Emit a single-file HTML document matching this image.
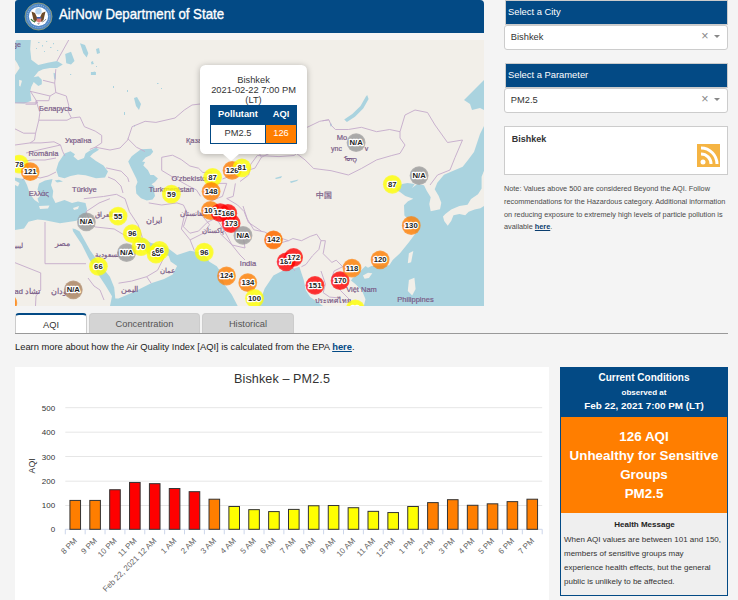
<!DOCTYPE html>
<html><head><meta charset="utf-8">
<style>
*{box-sizing:border-box;margin:0;padding:0}
html,body{width:738px;height:600px;overflow:hidden;background:#f4f4f4;font-family:"Liberation Sans",sans-serif;color:#333}
.abs{position:absolute}
#hdr{left:15px;top:0;width:469px;height:33px;background:#034a85;border-radius:3px 4px 0 0}
#hdr .t{left:43.5px;top:5px;color:#fff;font-size:15px;white-space:nowrap;transform:scaleX(0.884);transform-origin:0 0;-webkit-text-stroke:0.35px #fff}
.sel{left:505px;width:223px;border:1px solid #ccc;background:#fff}
.sel .h{background:#034a85;color:#fff;font-size:9.4px;height:23px;padding:5px 0 0 2px}
.inp{left:504.3px;width:223.7px;height:24.5px;border:1px solid #ccc;border-radius:3px;background:#fff;font-size:9.3px;padding:6px 0 0 5.5px;color:#333}
.inp .x{position:absolute;right:18.5px;top:2.5px;color:#888;font-size:12.5px}
.inp .a{position:absolute;right:6.5px;top:9px;width:0;height:0;border-left:3.5px solid transparent;border-right:3.5px solid transparent;border-top:3.5px solid #888}
#city{left:504.2px;top:126px;width:223.8px;height:49px;border:1px solid #ccc;background:#fff}
#city .n{position:absolute;left:6.5px;top:6.5px;font-size:9px;font-weight:bold;color:#333}
#city .rss{position:absolute;left:192.3px;top:17.2px;width:22.8px;height:22.6px;background:#f5b443}
#note{left:504px;top:182.6px;width:224px;font-size:7.3px;line-height:12.95px;color:#4a4a4a}
.tab{top:313px;height:21px;border:1px solid #ccc;border-bottom:none;border-radius:4px 4px 0 0;background:#d4d4d4;font-size:9.3px;color:#555;text-align:center;padding-top:5.4px}
#chart{left:15px;top:367px;width:534px;height:233px;background:#fff}
#cc{left:560px;top:367px;width:168px;height:229px;border:1px solid #034a85;background:#efefef}
#cc .top{position:absolute;left:0;top:0;width:166px;height:50px;background:#034a85;color:#fff;font-weight:bold;text-align:center}
#cc .org{position:absolute;left:0;top:49px;width:166px;height:96px;background:#ff7e00;color:#fff;font-weight:bold;text-align:center;font-size:13.4px;line-height:19px;padding-top:9.9px}
#cc .hm{position:absolute;left:0;top:144.2px;width:166px;font-size:8px;color:#333;padding:6px 2px 0 3px;line-height:14px}
#pop{left:199.8px;top:64.7px;width:107.5px;height:89.3px;background:#fff;border-radius:5.5px;box-shadow:0 1px 6px rgba(0,0,0,.28)}
#pop .tip{position:absolute;left:23.2px;top:89.3px;width:0;height:0;border-left:8px solid transparent;border-right:8px solid transparent;border-top:7px solid #fff}
#pop .txt{position:absolute;left:0;top:10.3px;width:107.5px;text-align:center;font-size:9.3px;line-height:10px;color:#333}
#pop table{position:absolute;left:10.2px;top:40.5px;width:87px;border-collapse:collapse;font-size:9.3px}
#pop td{border:1px solid #034a85;text-align:center;height:19px;padding-bottom:1.5px}
</style></head><body>
<div id="hdr" class="abs">
<svg class="abs" style="left:9px;top:2px" width="29" height="29" viewBox="0 0 29 29">
<polygon points="14.5,1 19.7,2 24,5 27,9.3 28,14.5 27,19.7 24,24 19.7,27 14.5,28 9.3,27 5,24 2,19.7 1,14.5 2,9.3 5,5 9.3,2" fill="#4f86c4" stroke="#b5b26c" stroke-width="0.7"/>
<circle cx="14.5" cy="14.5" r="11.2" fill="none" stroke="#9cc0e6" stroke-width="1" stroke-dasharray="1 1.2"/>
<circle cx="14.5" cy="14.5" r="9.6" fill="#fff"/>
<circle cx="14.5" cy="9.3" r="3.2" fill="#b9d6ee"/>
<path d="M7.5 9.5 L11 11 L13.5 16.5 L12 20 L9.5 18 Z" fill="#6e4b28"/>
<path d="M21.5 9.5 L18 11 L15.5 16.5 L17 20 L19.5 18 Z" fill="#6e4b28"/>
<path d="M12.8 16 h4.4 v3.2 q-2.2 2.4 -4.4 0 Z" fill="#e07a7a"/>
<rect x="12.8" y="15" width="4.4" height="1.6" fill="#3b5fa8"/>
<path d="M7 17 q1.5 2.5 4 3" stroke="#3f7a3a" stroke-width="1.4" fill="none"/>
<path d="M22 17 q-1.5 2.5 -4 3" stroke="#9a9a9a" stroke-width="1" fill="none"/>
<path d="M13 21 l1.5 2 l1.5 -2 Z" fill="#aaa"/>
</svg>
<div class="t abs">AirNow Department of State</div></div>
<svg class="abs" style="left:15px;top:40px" width="469" height="266" viewBox="15 40 469 266">
<rect x="15" y="40" width="469" height="266" fill="#f2efe9"/>
<path d="M15.0 43.0 L16.2 40.0 L30.8 40.0 L30.2 49.3 L31.3 59.8 L38.3 65.1 L47.7 62.8 L57.0 61.0 L62.8 64.5 L57.0 68.0 L50.0 68.0 L43.0 69.2 L38.3 71.5 L33.7 77.3 L38.3 76.2 L41.8 79.7 L41.8 84.3 L38.3 86.1 L33.7 82.0 L31.3 86.7 L30.2 91.3 L31.3 100.7 L24.3 103.6 L15.0 103.0 L15.0 75.0 L19.7 68.0 L17.3 63.3 L15.0 59.8Z" fill="#aad3df"/>
<path d="M65.2 54.0 L71.0 51.7 L74.5 61.0 L71.0 64.5 L66.3 63.3Z" fill="#aad3df"/>
<path d="M80.0 43.3 L85.0 45.0 L88.3 53.3 L86.7 57.5 L83.3 53.3 L81.7 48.3Z" fill="#aad3df"/>
<path d="M53.5 72.7 L55.8 73.8 L55.8 79.7 L54.1 78.5Z" fill="#aad3df"/>
<path d="M134.0 98.0 L137.0 97.0 L141.0 104.0 L139.0 110.0 L136.0 106.0Z" fill="#aad3df"/>
<path d="M96.0 49.0 L99.0 48.0 L100.0 53.0 L97.0 54.0Z" fill="#aad3df"/>
<path d="M56.2 170.0 L58.5 162.5 L64.5 153.5 L70.5 151.2 L75.0 154.2 L73.5 156.5 L78.0 160.2 L84.0 158.0 L85.5 153.5 L90.0 150.5 L96.0 147.5 L99.0 149.7 L93.0 153.5 L90.0 156.5 L96.0 161.0 L103.5 165.5 L108.0 171.5 L105.0 177.5 L96.0 178.2 L85.5 175.2 L78.0 174.5 L70.5 176.0 L64.5 178.2 L58.5 176.7Z" fill="#aad3df"/>
<path d="M128.2 161.6 L131.7 156.3 L136.3 152.8 L141.0 149.3 L151.5 148.7 L153.2 151.7 L150.3 155.2 L145.6 157.5 L142.1 161.6 L145.1 162.1 L143.3 165.6 L148.0 170.3 L150.3 175.0 L153.8 175.0 L157.9 178.5 L155.0 182.0 L151.5 184.3 L154.4 186.6 L153.8 190.1 L155.0 196.0 L152.6 199.4 L146.8 200.6 L141.0 198.3 L136.3 193.6 L135.7 186.6 L137.5 182.0 L136.3 178.5 L132.8 171.5 L130.5 166.8Z" fill="#aad3df"/>
<path d="M15.0 177.5 L24.0 179.0 L27.0 185.0 L30.0 194.0 L34.5 200.0 L39.0 203.0 L37.5 198.5 L40.5 195.5 L37.5 189.5 L39.0 183.5 L45.0 180.5 L52.5 179.0 L51.0 185.0 L53.2 191.0 L52.5 197.0 L55.5 203.0 L64.5 200.0 L72.0 203.0 L78.0 201.5 L85.5 203.0 L87.0 209.0 L85.5 218.0 L75.0 221.0 L60.0 223.2 L45.0 220.2 L37.5 219.5 L28.5 221.7 L24.0 228.5 L15.0 230.0Z" fill="#aad3df"/>
<path d="M54.7 180.5 L59.0 179.8 L63.0 181.5 L57.0 182.5Z" fill="#aad3df"/>
<path d="M72.5 228.5 L75.0 229.0 L79.5 231.2 L90.4 250.7 L101.2 265.9 L109.9 276.7 L114.2 287.6 L115.3 298.4 L118.5 298.4 L114.2 306.0 L110.0 306.0 L112.0 296.2 L105.5 285.4 L96.9 272.4 L88.2 257.2 L81.7 244.2 L73.0 231.2Z" fill="#aad3df"/>
<path d="M134.0 236.0 L142.4 237.7 L151.1 243.1 L164.1 245.3 L168.4 248.5 L177.1 255.0 L170.0 256.0 L164.1 255.0 L157.6 257.2 L150.0 255.0 L140.0 246.0Z" fill="#aad3df"/>
<path d="M112.0 306.0 L118.5 298.4 L133.7 291.9 L151.1 283.2 L164.1 278.9 L172.7 274.6 L177.1 265.9 L170.6 261.5 L168.4 255.0 L177.1 255.0 L190.1 250.7 L194.5 251.4 L204.0 253.0 L209.4 261.8 L216.8 266.3 L219.8 270.8 L224.3 284.2 L231.7 294.6 L237.7 306.0Z" fill="#aad3df"/>
<path d="M258.2 306.0 L264.7 288.4 L273.4 275.4 L282.0 271.0 L292.9 268.9 L299.4 266.7 L301.5 273.2 L303.7 279.7 L305.9 290.6 L310.2 297.1 L316.7 301.4 L323.2 306.0Z" fill="#aad3df"/>
<path d="M484.0 126.0 L480.0 134.0 L474.0 152.0 L468.0 160.0 L462.7 166.7 L453.3 170.7 L444.0 174.7 L437.3 182.7 L434.7 189.3 L438.7 196.0 L441.3 202.7 L440.0 209.3 L430.7 211.3 L429.3 204.0 L430.7 197.3 L426.7 190.7 L424.0 185.3 L417.3 184.0 L412.0 188.0 L414.7 184.0 L407.5 183.1 L402.0 184.0 L396.0 190.0 L400.0 192.0 L405.3 196.0 L413.3 198.7 L408.0 201.3 L404.0 205.3 L404.4 215.6 L413.3 224.4 L415.6 233.3 L408.9 242.2 L400.0 253.2 L392.7 260.1 L389.3 265.2 L371.4 266.0 L368.0 267.7 L365.5 266.0 L361.2 270.3 L357.8 274.5 L352.7 277.9 L351.0 280.5 L355.3 283.9 L358.7 287.3 L362.1 290.7 L363.8 295.0 L365.5 299.2 L363.8 306.0 L484.0 306.0Z" fill="#aad3df"/>
<path d="M484.0 80.0 L476.0 88.0 L464.0 100.0 L470.0 104.0 L472.0 110.0 L480.0 108.0 L484.0 110.0Z" fill="#aad3df"/>
<path d="M367.2 95.0 L368.6 99.1 L363.2 108.6 L355.0 116.7 L346.9 122.1 L344.2 119.4 L352.3 114.0 L360.5 105.9 L365.9 96.4Z" fill="#aad3df"/>
<path d="M330.0 124.0 L331.5 123.5 L332.0 126.0 L330.5 126.5Z" fill="#aad3df"/>
<path d="M38.0 42.0 L39.5 42.0 L39.5 43.0 L38.0 43.0Z" fill="#aad3df"/>
<path d="M42.0 45.0 L43.0 45.0 L43.0 46.5 L42.0 46.5Z" fill="#aad3df"/>
<path d="M46.0 41.0 L47.2 41.0 L47.2 42.0 L46.0 42.0Z" fill="#aad3df"/>
<path d="M50.0 47.0 L51.5 47.0 L51.5 48.0 L50.0 48.0Z" fill="#aad3df"/>
<path d="M44.0 51.0 L45.0 51.0 L45.0 52.0 L44.0 52.0Z" fill="#aad3df"/>
<path d="M53.0 43.0 L54.0 43.0 L54.0 44.2 L53.0 44.2Z" fill="#aad3df"/>
<path d="M36.0 48.0 L37.0 48.0 L37.0 49.0 L36.0 49.0Z" fill="#aad3df"/>
<path d="M57.0 50.0 L58.2 50.0 L58.2 51.0 L57.0 51.0Z" fill="#aad3df"/>
<path d="M90.9 72.0 L95.9 72.0 L95.9 75.0 L90.9 75.0Z" fill="#aad3df"/>
<path d="M92.0 63.0 L93.5 63.0 L93.5 64.0 L92.0 64.0Z" fill="#aad3df"/>
<path d="M96.0 66.0 L97.0 66.0 L97.0 67.0 L96.0 67.0Z" fill="#aad3df"/>
<path d="M70.0 74.0 L71.2 74.0 L71.2 75.0 L70.0 75.0Z" fill="#aad3df"/>
<path d="M113.0 86.0 L114.0 86.0 L114.0 88.0 L113.0 88.0Z" fill="#aad3df"/>
<path d="M127.0 90.0 L128.0 90.0 L128.0 92.0 L127.0 92.0Z" fill="#aad3df"/>
<path d="M157.0 83.0 L158.5 83.0 L158.5 84.0 L157.0 84.0Z" fill="#aad3df"/>
<path d="M161.0 88.0 L162.0 88.0 L162.0 89.0 L161.0 89.0Z" fill="#aad3df"/>
<path d="M124.0 112.0 L125.0 112.0 L125.0 115.0 L124.0 115.0Z" fill="#aad3df"/>
<path d="M134.0 125.0 L135.0 125.0 L135.0 126.5 L134.0 126.5Z" fill="#aad3df"/>
<path d="M91.0 62.0 L93.0 61.0 L93.5 64.0 L91.5 64.5Z" fill="#aad3df"/>
<path d="M93.0 72.0 L95.0 71.5 L95.5 74.0 L93.5 74.5Z" fill="#aad3df"/>
<path d="M289.9 181.5 L298.5 179.4 L297.0 181.0 L291.0 183.0Z" fill="#aad3df"/>
<path d="M275.0 178.0 L282.0 176.0 L281.0 178.0 L276.0 179.0Z" fill="#aad3df"/>
<path d="M19.1 79.7 L22.0 80.8 L20.3 86.7 L19.1 85.5Z" fill="#f2efe9"/>
<path d="M484.0 170.8 L481.6 176.7 L481.6 188.4 L478.0 194.2 L471.0 198.9 L467.5 204.7 L459.4 205.9 L451.2 209.4 L445.3 214.1 L443.0 216.4 L444.2 221.1 L447.7 225.7 L451.2 221.1 L453.5 215.2 L459.4 214.1 L465.2 215.2 L468.7 211.7 L474.6 209.4 L480.4 208.2 L484.0 205.9Z" fill="#f2efe9"/>
<path d="M408.9 253.3 L413.3 251.1 L411.1 262.2 L407.8 263.3Z" fill="#f2efe9"/>
<path d="M408.9 280.0 L414.4 277.8 L415.6 288.9 L412.2 295.6 L407.8 291.1Z" fill="#f2efe9"/>
<path d="M362.9 275.4 L368.0 272.8 L372.3 273.3 L368.9 277.9 L364.6 278.8Z" fill="#f2efe9"/>
<path d="M39.0 206.0 L49.5 205.5 L48.0 208.5 L40.0 209.0Z" fill="#f2efe9"/>
<path d="M15.0 180.5 L19.5 183.0 L18.0 186.5 L15.0 185.0Z" fill="#f2efe9"/>
<path d="M73.0 208.0 L79.0 206.0 L78.0 209.0 L74.0 210.0Z" fill="#f2efe9"/>
<g fill="none" stroke="#c4aacb" stroke-width="0.9"><polyline points="68.7,40.0 57.0,61.0"/><polyline points="55.8,69.2 54.7,83.2 55.8,92.5 66.3,96.0 68.7,105.3 68.1,111.5 71.4,118.0"/><polyline points="43.0,80.3 54.7,83.2"/><polyline points="30.2,91.3 50.0,96.0 55.8,92.5"/><polyline points="50.0,96.0 48.8,100.7 36.0,100.7 36.0,104.2 25.5,104.2"/><polyline points="36.0,100.7 39.9,112.6 38.8,120.2 35.6,133.2 34.5,140.0 30.2,142.9"/><polyline points="38.8,120.2 67.0,120.2 71.4,118.0"/><polyline points="71.4,118.0 80.0,117.0 84.4,126.7 95.2,131.1 101.7,135.4 101.7,142.9 95.2,147.2 89.8,149.4"/><polyline points="15.0,102.9 37.8,102.9"/><polyline points="15.0,128.9 23.7,133.2 35.6,133.2"/><polyline points="30.2,91.0 37.8,102.9"/><polyline points="15.0,145.0 30.2,142.9 41.0,142.9 54.0,141.8 60.5,145.0 62.7,151.5 64.9,155.9"/><polyline points="26.0,153.0 41.0,149.4 60.5,145.0"/><polyline points="18.0,162.0 32.0,160.0 45.0,160.0 56.0,158.0"/><polyline points="22.0,180.0 30.0,175.0 40.0,178.0 48.0,176.0 56.0,172.0"/><polyline points="95.2,147.2 110.0,150.0 120.0,148.0 127.7,140.0 132.1,126.7 145.1,121.3 155.9,122.4 175.0,118.0 184.3,110.0 192.0,105.0 200.0,104.0"/><polyline points="127.7,138.5 136.4,147.2 145.0,151.5"/><polyline points="307.2,127.3 319.7,121.3 322.4,120.8 328.9,119.8"/><polyline points="106.1,167.9 121.2,171.2 127.7,177.7 129.0,182.0"/><polyline points="108.0,177.0 115.0,180.0 121.0,186.0 123.0,193.0"/><polyline points="83.8,198.7 103.4,196.5 116.4,194.3 125.0,198.7"/><polyline points="125.0,198.7 129.4,211.7 138.0,224.7 142.4,237.7"/><polyline points="86.0,211.7 99.0,203.0 109.9,198.7"/><polyline points="94.7,226.9 114.2,229.0 125.0,235.5 135.9,239.9"/><polyline points="86.0,211.7 90.0,222.0 94.7,226.9"/><polyline points="45.0,222.0 45.0,263.7 86.0,263.7"/><polyline points="15.0,262.7 40.7,272.9 40.7,290.0 36.0,296.0 35.5,306.0"/><polyline points="88.0,278.0 94.0,286.0 100.0,290.0 104.0,300.0"/><polyline points="118.5,283.2 131.5,281.1 146.7,276.7 157.6,270.2 164.1,257.2"/><polyline points="151.1,283.2 146.7,276.7"/><polyline points="161.7,157.3 172.5,155.2 181.2,159.5 189.9,166.0 198.5,168.2 202.9,172.5 212.0,172.0"/><polyline points="161.7,157.3 161.7,170.4 172.5,176.9 187.7,185.5 196.4,189.9 200.7,196.4"/><polyline points="148.7,202.9 161.7,205.0 176.9,202.9 183.4,205.0 187.7,213.7"/><polyline points="187.7,213.7 183.4,226.7 189.9,233.2 198.5,231.1 207.2,222.4 215.9,218.0"/><polyline points="185.7,209.5 181.4,229.0 190.1,239.9 194.4,250.7"/><polyline points="198.8,211.7 209.6,224.7 203.1,233.4 190.1,239.9"/><polyline points="222.4,179.0 239.7,172.5 254.9,168.2 261.4,157.3 259.2,153.0"/><polyline points="261.4,157.3 270.1,153.0 274.4,144.3"/><polyline points="235.4,183.4 233.2,196.4 226.7,198.5 237.6,205.0 244.1,211.5 248.4,222.4 261.4,231.1"/><polyline points="211.5,183.4 226.7,183.4 222.4,196.4 211.5,200.7"/><polyline points="215.9,218.0 225.0,232.0 232.0,245.0 240.0,255.0 245.0,260.0"/><polyline points="294.2,155.5 279.0,156.6 257.3,155.5 250.8,164.2 248.7,175.0 240.0,181.5"/><polyline points="307.2,127.3 298.5,133.8 296.4,153.4 294.2,155.5"/><polyline points="322.4,120.8 328.9,119.8 331.1,125.2 335.4,129.5 348.4,129.5 361.4,127.3 376.6,131.7 389.6,129.5 400.0,131.7 405.0,115.0 415.0,110.0 427.5,112.5 435.0,125.0 447.5,142.5 462.5,140.0 455.0,157.5 450.0,170.0 437.5,175.0 430.0,185.0"/><polyline points="296.4,153.4 305.0,159.9 313.7,168.5 331.1,170.7 348.4,175.0 361.4,168.5 376.6,159.9 391.8,155.5 400.0,153.4 405.0,145.0 400.0,138.0 400.0,131.7"/><polyline points="243.0,206.0 247.3,219.0 253.8,229.8 264.7,232.0 273.4,236.4 282.0,238.5 288.5,240.7 292.9,238.5 301.5,240.7 310.2,236.4 316.7,234.2 321.0,240.7 325.4,240.7"/><polyline points="321.0,240.7 318.9,249.4 312.4,255.9 305.9,264.5 301.5,266.7"/><polyline points="325.4,240.7 323.2,253.7 331.9,262.4 336.2,260.2 342.7,266.7 351.4,266.7 360.0,266.0"/><polyline points="342.7,266.7 334.1,271.0 331.9,277.5 340.6,290.6 351.4,301.4"/><polyline points="321.0,271.0 325.4,284.0 323.2,292.7 329.7,297.1 340.0,298.0"/><polyline points="284.2,255.9 288.5,262.4 295.0,271.0"/><polyline points="270.0,237.0 272.0,242.0 280.0,243.0 288.5,240.7"/><polyline points="220.0,233.4 232.0,245.0 245.0,248.0 243.0,236.0"/></g>
<g fill="#7a5c88" stroke="#7a5c88" stroke-width="0.2" font-family="Liberation Sans, sans-serif">
<text x="55.5" y="110.8" font-size="7.5" text-anchor="middle">Беларусь</text>
<text x="78.3" y="142.9" font-size="7.5" text-anchor="middle">Україна</text>
<text x="43.4" y="156.3" font-size="7.5" text-anchor="middle">România</text>
<text x="38.8" y="195.5" font-size="7.5" text-anchor="middle">Ελλάς</text>
<text x="84.4" y="191.6" font-size="7.5" text-anchor="middle">Türkiye</text>
<text x="186" y="143.1" font-size="7.5" text-anchor="start">Қаза</text>
<text x="171.4" y="180.5" font-size="7.5" text-anchor="start">O'zbekiston</text>
<text x="148.7" y="192.0" font-size="7.5" text-anchor="start">Turkmenistan</text>
<text x="154.3" y="223.0" font-size="7.5" text-anchor="middle">ایران</text>
<text x="62" y="245.6" font-size="7.5" text-anchor="middle">مصر</text>
<text x="108" y="256.6" font-size="7" text-anchor="middle">السعودية</text>
<text x="167.3" y="272.8" font-size="7" text-anchor="middle">عمان</text>
<text x="129.3" y="292.3" font-size="7.5" text-anchor="middle">اليمن</text>
<text x="18" y="247.6" font-size="7" text-anchor="middle">ليبيا</text>
<text x="64" y="294.1" font-size="7.5" text-anchor="middle">السودان</text>
<text x="40" y="293.6" font-size="7.5" text-anchor="end">ad تشاد</text>
<text x="193.3" y="216.4" font-size="7" text-anchor="middle">افغانستان</text>
<text x="212.6" y="232.7" font-size="7" text-anchor="middle">پاکستان</text>
<text x="248" y="266.1" font-size="7.5" text-anchor="middle">India</text>
<text x="323.5" y="198.2" font-size="7.5" text-anchor="middle">中国</text>
<text x="361.5" y="292.0" font-size="7.5" text-anchor="middle">Việt Nam</text>
<text x="332.5" y="302.9" font-size="7" text-anchor="middle">ประเทศไทย</text>
<text x="415.5" y="301.9" font-size="7.5" text-anchor="middle">Philippines</text>
<text x="342" y="139.7" font-size="7.5" text-anchor="middle">Mo</text>
<text x="336.5" y="150.6" font-size="7" text-anchor="middle">ync</text>
<text x="366.5" y="150.6" font-size="7" text-anchor="middle">v</text>
<text x="350" y="160.6" font-size="7" text-anchor="middle">ᠮᠣᠩ</text>
<text x="17" y="46.6" font-size="7" text-anchor="middle">ge</text>
<text x="104" y="216.6" font-size="7" text-anchor="middle">العراق</text>
</g>
<g font-family="Liberation Sans, sans-serif" font-weight="bold" text-anchor="middle">
<circle cx="7.8" cy="303" r="9.4" fill="#ff7e00" fill-opacity="0.7"/><circle cx="7.8" cy="303" r="8.4" fill="#ff7e00" fill-opacity="0.35"/>
<circle cx="19.3" cy="164.1" r="9.4" fill="#ffff00" fill-opacity="0.7"/><circle cx="19.3" cy="164.1" r="8.4" fill="#ffff00" fill-opacity="0.35"/>
<circle cx="30.2" cy="171.7" r="9.4" fill="#ff7e00" fill-opacity="0.7"/><circle cx="30.2" cy="171.7" r="8.4" fill="#ff7e00" fill-opacity="0.35"/>
<circle cx="212.6" cy="177.3" r="9.4" fill="#ffff00" fill-opacity="0.7"/><circle cx="212.6" cy="177.3" r="8.4" fill="#ffff00" fill-opacity="0.35"/>
<circle cx="232.1" cy="170.4" r="9.4" fill="#ff7e00" fill-opacity="0.7"/><circle cx="232.1" cy="170.4" r="8.4" fill="#ff7e00" fill-opacity="0.35"/>
<circle cx="241.9" cy="167.8" r="9.4" fill="#ffff00" fill-opacity="0.7"/><circle cx="241.9" cy="167.8" r="8.4" fill="#ffff00" fill-opacity="0.35"/>
<circle cx="171.4" cy="194.2" r="9.4" fill="#ffff00" fill-opacity="0.7"/><circle cx="171.4" cy="194.2" r="8.4" fill="#ffff00" fill-opacity="0.35"/>
<circle cx="211.1" cy="191.4" r="9.4" fill="#ff7e00" fill-opacity="0.7"/><circle cx="211.1" cy="191.4" r="8.4" fill="#ff7e00" fill-opacity="0.35"/>
<circle cx="210.5" cy="210.5" r="9.4" fill="#ff7e00" fill-opacity="0.7"/><circle cx="210.5" cy="210.5" r="8.4" fill="#ff7e00" fill-opacity="0.35"/>
<circle cx="231.1" cy="223.5" r="9.4" fill="#ff0000" fill-opacity="0.7"/><circle cx="231.1" cy="223.5" r="8.4" fill="#ff0000" fill-opacity="0.35"/>
<circle cx="220.2" cy="212.6" r="9.4" fill="#ff0000" fill-opacity="0.7"/><circle cx="220.2" cy="212.6" r="8.4" fill="#ff0000" fill-opacity="0.35"/>
<circle cx="227.8" cy="213.3" r="9.4" fill="#ff0000" fill-opacity="0.7"/><circle cx="227.8" cy="213.3" r="8.4" fill="#ff0000" fill-opacity="0.35"/>
<circle cx="243" cy="235.4" r="9.4" fill="#999999" fill-opacity="0.7"/><circle cx="243" cy="235.4" r="8.4" fill="#999999" fill-opacity="0.35"/>
<circle cx="118.1" cy="216.1" r="9.4" fill="#ffff00" fill-opacity="0.7"/><circle cx="118.1" cy="216.1" r="8.4" fill="#ffff00" fill-opacity="0.35"/>
<circle cx="86.4" cy="221.9" r="9.4" fill="#999999" fill-opacity="0.7"/><circle cx="86.4" cy="221.9" r="8.4" fill="#999999" fill-opacity="0.35"/>
<circle cx="132.2" cy="233.7" r="9.4" fill="#ffff00" fill-opacity="0.7"/><circle cx="132.2" cy="233.7" r="8.4" fill="#ffff00" fill-opacity="0.35"/>
<circle cx="126.6" cy="252.6" r="9.4" fill="#999999" fill-opacity="0.7"/><circle cx="126.6" cy="252.6" r="8.4" fill="#999999" fill-opacity="0.35"/>
<circle cx="141" cy="246.6" r="9.4" fill="#ffff00" fill-opacity="0.7"/><circle cx="141" cy="246.6" r="8.4" fill="#ffff00" fill-opacity="0.35"/>
<circle cx="156" cy="254" r="9.4" fill="#ffff00" fill-opacity="0.7"/><circle cx="156" cy="254" r="8.4" fill="#ffff00" fill-opacity="0.35"/>
<circle cx="159.5" cy="250.5" r="9.4" fill="#ffff00" fill-opacity="0.7"/><circle cx="159.5" cy="250.5" r="8.4" fill="#ffff00" fill-opacity="0.35"/>
<circle cx="98.4" cy="266.3" r="9.4" fill="#ffff00" fill-opacity="0.7"/><circle cx="98.4" cy="266.3" r="8.4" fill="#ffff00" fill-opacity="0.35"/>
<circle cx="73.3" cy="289.8" r="9.4" fill="#a8825e" fill-opacity="0.7"/><circle cx="73.3" cy="289.8" r="8.4" fill="#a8825e" fill-opacity="0.35"/>
<circle cx="204.2" cy="252.1" r="9.4" fill="#ffff00" fill-opacity="0.7"/><circle cx="204.2" cy="252.1" r="8.4" fill="#ffff00" fill-opacity="0.35"/>
<circle cx="226.5" cy="276" r="9.4" fill="#ff7e00" fill-opacity="0.7"/><circle cx="226.5" cy="276" r="8.4" fill="#ff7e00" fill-opacity="0.35"/>
<circle cx="247.8" cy="282.7" r="9.4" fill="#ff7e00" fill-opacity="0.7"/><circle cx="247.8" cy="282.7" r="8.4" fill="#ff7e00" fill-opacity="0.35"/>
<circle cx="254.5" cy="298.3" r="9.4" fill="#ffff00" fill-opacity="0.7"/><circle cx="254.5" cy="298.3" r="8.4" fill="#ffff00" fill-opacity="0.35"/>
<circle cx="273.5" cy="239.8" r="9.4" fill="#ff7e00" fill-opacity="0.7"/><circle cx="273.5" cy="239.8" r="8.4" fill="#ff7e00" fill-opacity="0.35"/>
<circle cx="273.5" cy="239.8" r="9" fill="#ff5a00" fill-opacity="0.4"/>
<circle cx="286.1" cy="261.8" r="9.4" fill="#ff0000" fill-opacity="0.7"/><circle cx="286.1" cy="261.8" r="8.4" fill="#ff0000" fill-opacity="0.35"/>
<circle cx="293.6" cy="257.4" r="9.4" fill="#ff0000" fill-opacity="0.7"/><circle cx="293.6" cy="257.4" r="8.4" fill="#ff0000" fill-opacity="0.35"/>
<circle cx="315" cy="285.3" r="9.4" fill="#ff0000" fill-opacity="0.7"/><circle cx="315" cy="285.3" r="8.4" fill="#ff0000" fill-opacity="0.35"/>
<circle cx="340.1" cy="280.7" r="9.4" fill="#ff0000" fill-opacity="0.7"/><circle cx="340.1" cy="280.7" r="8.4" fill="#ff0000" fill-opacity="0.35"/>
<circle cx="352" cy="268.1" r="9.4" fill="#ff7e00" fill-opacity="0.7"/><circle cx="352" cy="268.1" r="8.4" fill="#ff7e00" fill-opacity="0.35"/>
<circle cx="380.1" cy="259.8" r="9.4" fill="#ff7e00" fill-opacity="0.7"/><circle cx="380.1" cy="259.8" r="8.4" fill="#ff7e00" fill-opacity="0.35"/>
<circle cx="411.25" cy="225.5" r="9.4" fill="#ff7e00" fill-opacity="0.7"/><circle cx="411.25" cy="225.5" r="8.4" fill="#ff7e00" fill-opacity="0.35"/>
<circle cx="392.3" cy="184.3" r="9.4" fill="#ffff00" fill-opacity="0.7"/><circle cx="392.3" cy="184.3" r="8.4" fill="#ffff00" fill-opacity="0.35"/>
<circle cx="419.1" cy="175.7" r="9.4" fill="#999999" fill-opacity="0.7"/><circle cx="419.1" cy="175.7" r="8.4" fill="#999999" fill-opacity="0.35"/>
<circle cx="356.1" cy="142.7" r="9.4" fill="#999999" fill-opacity="0.7"/><circle cx="356.1" cy="142.7" r="8.4" fill="#999999" fill-opacity="0.35"/>
<circle cx="355.3" cy="309" r="9.4" fill="#ffff00" fill-opacity="0.7"/><circle cx="355.3" cy="309" r="8.4" fill="#ffff00" fill-opacity="0.35"/>
<text x="19.3" y="166.5" font-size="7.7" fill="#222" stroke="#fff" stroke-width="2.4" stroke-linejoin="round" paint-order="stroke">78</text>
<text x="30.2" y="174.1" font-size="7.7" fill="#222" stroke="#fff" stroke-width="2.4" stroke-linejoin="round" paint-order="stroke">121</text>
<text x="212.6" y="179.7" font-size="7.7" fill="#222" stroke="#fff" stroke-width="2.4" stroke-linejoin="round" paint-order="stroke">87</text>
<text x="232.1" y="172.8" font-size="7.7" fill="#222" stroke="#fff" stroke-width="2.4" stroke-linejoin="round" paint-order="stroke">126</text>
<text x="241.9" y="170.2" font-size="7.7" fill="#222" stroke="#fff" stroke-width="2.4" stroke-linejoin="round" paint-order="stroke">81</text>
<text x="171.4" y="196.6" font-size="7.7" fill="#222" stroke="#fff" stroke-width="2.4" stroke-linejoin="round" paint-order="stroke">59</text>
<text x="211.1" y="193.8" font-size="7.7" fill="#222" stroke="#fff" stroke-width="2.4" stroke-linejoin="round" paint-order="stroke">148</text>
<text x="210.5" y="212.9" font-size="7.7" fill="#222" stroke="#fff" stroke-width="2.4" stroke-linejoin="round" paint-order="stroke">101</text>
<text x="231.1" y="225.9" font-size="7.7" fill="#222" stroke="#fff" stroke-width="2.4" stroke-linejoin="round" paint-order="stroke">173</text>
<text x="220.2" y="215.0" font-size="7.7" fill="#222" stroke="#fff" stroke-width="2.4" stroke-linejoin="round" paint-order="stroke">158</text>
<text x="227.8" y="215.7" font-size="7.7" fill="#222" stroke="#fff" stroke-width="2.4" stroke-linejoin="round" paint-order="stroke">166</text>
<text x="243" y="237.8" font-size="7.7" fill="#222" stroke="#fff" stroke-width="2.4" stroke-linejoin="round" paint-order="stroke">N/A</text>
<text x="118.1" y="218.5" font-size="7.7" fill="#222" stroke="#fff" stroke-width="2.4" stroke-linejoin="round" paint-order="stroke">55</text>
<text x="86.4" y="224.3" font-size="7.7" fill="#222" stroke="#fff" stroke-width="2.4" stroke-linejoin="round" paint-order="stroke">N/A</text>
<text x="132.2" y="236.1" font-size="7.7" fill="#222" stroke="#fff" stroke-width="2.4" stroke-linejoin="round" paint-order="stroke">96</text>
<text x="126.6" y="255.0" font-size="7.7" fill="#222" stroke="#fff" stroke-width="2.4" stroke-linejoin="round" paint-order="stroke">N/A</text>
<text x="141" y="249.0" font-size="7.7" fill="#222" stroke="#fff" stroke-width="2.4" stroke-linejoin="round" paint-order="stroke">70</text>
<text x="156" y="256.4" font-size="7.7" fill="#222" stroke="#fff" stroke-width="2.4" stroke-linejoin="round" paint-order="stroke">88</text>
<text x="159.5" y="252.9" font-size="7.7" fill="#222" stroke="#fff" stroke-width="2.4" stroke-linejoin="round" paint-order="stroke">66</text>
<text x="98.4" y="268.7" font-size="7.7" fill="#222" stroke="#fff" stroke-width="2.4" stroke-linejoin="round" paint-order="stroke">66</text>
<text x="73.3" y="292.2" font-size="7.7" fill="#222" stroke="#fff" stroke-width="2.4" stroke-linejoin="round" paint-order="stroke">N/A</text>
<text x="204.2" y="254.5" font-size="7.7" fill="#222" stroke="#fff" stroke-width="2.4" stroke-linejoin="round" paint-order="stroke">96</text>
<text x="226.5" y="278.4" font-size="7.7" fill="#222" stroke="#fff" stroke-width="2.4" stroke-linejoin="round" paint-order="stroke">124</text>
<text x="247.8" y="285.1" font-size="7.7" fill="#222" stroke="#fff" stroke-width="2.4" stroke-linejoin="round" paint-order="stroke">134</text>
<text x="254.5" y="300.7" font-size="7.7" fill="#222" stroke="#fff" stroke-width="2.4" stroke-linejoin="round" paint-order="stroke">100</text>
<text x="273.5" y="242.2" font-size="7.7" fill="#222" stroke="#fff" stroke-width="2.4" stroke-linejoin="round" paint-order="stroke">142</text>
<text x="286.1" y="264.2" font-size="7.7" fill="#222" stroke="#fff" stroke-width="2.4" stroke-linejoin="round" paint-order="stroke">187</text>
<text x="293.6" y="259.8" font-size="7.7" fill="#222" stroke="#fff" stroke-width="2.4" stroke-linejoin="round" paint-order="stroke">172</text>
<text x="315" y="287.7" font-size="7.7" fill="#222" stroke="#fff" stroke-width="2.4" stroke-linejoin="round" paint-order="stroke">151</text>
<text x="340.1" y="283.1" font-size="7.7" fill="#222" stroke="#fff" stroke-width="2.4" stroke-linejoin="round" paint-order="stroke">170</text>
<text x="352" y="270.5" font-size="7.7" fill="#222" stroke="#fff" stroke-width="2.4" stroke-linejoin="round" paint-order="stroke">118</text>
<text x="380.1" y="262.2" font-size="7.7" fill="#222" stroke="#fff" stroke-width="2.4" stroke-linejoin="round" paint-order="stroke">120</text>
<text x="411.25" y="227.9" font-size="7.7" fill="#222" stroke="#fff" stroke-width="2.4" stroke-linejoin="round" paint-order="stroke">130</text>
<text x="392.3" y="186.7" font-size="7.7" fill="#222" stroke="#fff" stroke-width="2.4" stroke-linejoin="round" paint-order="stroke">87</text>
<text x="419.1" y="178.1" font-size="7.7" fill="#222" stroke="#fff" stroke-width="2.4" stroke-linejoin="round" paint-order="stroke">N/A</text>
<text x="356.1" y="145.1" font-size="7.7" fill="#222" stroke="#fff" stroke-width="2.4" stroke-linejoin="round" paint-order="stroke">N/A</text>
<text x="355.3" y="311.4" font-size="7.7" fill="#222" stroke="#fff" stroke-width="2.4" stroke-linejoin="round" paint-order="stroke">88</text>
</g>
</svg>
<div id="pop" class="abs"><div class="tip"></div>
<div class="txt">Bishkek<br>2021-02-22 7:00 PM<br>(LT)</div>
<table><tr style="background:#034a85;color:#fff;font-weight:bold"><td style="width:55px">Pollutant</td><td>AQI</td></tr>
<tr><td style="background:#fff;color:#333">PM2.5</td><td style="background:#ff7e00;color:#fff">126</td></tr></table>
</div>
<div class="abs sel" style="top:0;height:25px"><div class="h">Select a City</div></div>
<div class="abs inp" style="top:25px">Bishkek<span class="x">×</span><span class="a"></span></div>
<div class="abs sel" style="top:63px;height:25px"><div class="h">Select a Parameter</div></div>
<div class="abs inp" style="top:88px">PM2.5<span class="x">×</span><span class="a"></span></div>
<div id="city" class="abs"><span class="n">Bishkek</span><div class="rss">
<svg width="24" height="24" viewBox="0 0 24 24"><circle cx="6" cy="18" r="2.5" fill="#fff"/><path d="M4 10 A10 10 0 0 1 14 20" stroke="#fff" stroke-width="3" fill="none"/><path d="M4 4 A16 16 0 0 1 20 20" stroke="#fff" stroke-width="3" fill="none"/></svg></div></div>
<div id="note" class="abs">Note: Values above 500 are considered Beyond the AQI. Follow recommendations for the Hazardous category. Additional information on reducing exposure to extremely high levels of particle pollution is available <b><u style="color:#0a3d6e">here</u></b>.</div>
<div class="abs tab" style="left:15px;width:72px;background:#fff;border-top:2px solid #034a85;color:#333">AQI</div>
<div class="abs tab" style="left:89px;width:111px">Concentration</div>
<div class="abs tab" style="left:202px;width:92px">Historical</div>
<div class="abs" style="left:15px;top:333px;width:713px;height:1px;background:#999"></div>
<div class="abs" style="left:15px;top:341.5px;font-size:9.35px;color:#222">Learn more about how the Air Quality Index [AQI] is calculated from the EPA <b><u style="color:#034a85">here</u></b>.</div>
<div id="chart" class="abs"></div>
<svg class="abs" style="left:0;top:0" width="738" height="600" viewBox="0 0 738 600">
<g stroke="#e6e6e6" stroke-width="1">
<line x1="65.3" y1="505.5" x2="542.2" y2="505.5"/>
<line x1="65.3" y1="481.2" x2="542.2" y2="481.2"/>
<line x1="65.3" y1="456.5" x2="542.2" y2="456.5"/>
<line x1="65.3" y1="432.2" x2="542.2" y2="432.2"/>
<line x1="65.3" y1="407.7" x2="542.2" y2="407.7"/>
</g>
<line x1="65.3" y1="529.3" x2="542.2" y2="529.3" stroke="#ccd6eb" stroke-width="1"/>
<g stroke="#ccd6eb" stroke-width="1">
<line x1="65.3" y1="529.3" x2="65.3" y2="534.3"/>
<line x1="85.17083333333333" y1="529.3" x2="85.17083333333333" y2="534.3"/>
<line x1="105.04166666666666" y1="529.3" x2="105.04166666666666" y2="534.3"/>
<line x1="124.9125" y1="529.3" x2="124.9125" y2="534.3"/>
<line x1="144.78333333333333" y1="529.3" x2="144.78333333333333" y2="534.3"/>
<line x1="164.65416666666667" y1="529.3" x2="164.65416666666667" y2="534.3"/>
<line x1="184.52499999999998" y1="529.3" x2="184.52499999999998" y2="534.3"/>
<line x1="204.39583333333331" y1="529.3" x2="204.39583333333331" y2="534.3"/>
<line x1="224.26666666666665" y1="529.3" x2="224.26666666666665" y2="534.3"/>
<line x1="244.1375" y1="529.3" x2="244.1375" y2="534.3"/>
<line x1="264.0083333333333" y1="529.3" x2="264.0083333333333" y2="534.3"/>
<line x1="283.87916666666666" y1="529.3" x2="283.87916666666666" y2="534.3"/>
<line x1="303.75" y1="529.3" x2="303.75" y2="534.3"/>
<line x1="323.62083333333334" y1="529.3" x2="323.62083333333334" y2="534.3"/>
<line x1="343.4916666666667" y1="529.3" x2="343.4916666666667" y2="534.3"/>
<line x1="363.3625" y1="529.3" x2="363.3625" y2="534.3"/>
<line x1="383.23333333333335" y1="529.3" x2="383.23333333333335" y2="534.3"/>
<line x1="403.1041666666667" y1="529.3" x2="403.1041666666667" y2="534.3"/>
<line x1="422.975" y1="529.3" x2="422.975" y2="534.3"/>
<line x1="442.84583333333336" y1="529.3" x2="442.84583333333336" y2="534.3"/>
<line x1="462.7166666666667" y1="529.3" x2="462.7166666666667" y2="534.3"/>
<line x1="482.58750000000003" y1="529.3" x2="482.58750000000003" y2="534.3"/>
<line x1="502.45833333333337" y1="529.3" x2="502.45833333333337" y2="534.3"/>
<line x1="522.3291666666667" y1="529.3" x2="522.3291666666667" y2="534.3"/>
<line x1="542.1999999999999" y1="529.3" x2="542.1999999999999" y2="534.3"/>
</g>
<g stroke="#333" stroke-width="1">
<rect x="69.94" y="500.42" width="10.6" height="28.88" fill="#ff7e00"/>
<rect x="89.81" y="500.42" width="10.6" height="28.88" fill="#ff7e00"/>
<rect x="109.68" y="489.74" width="10.6" height="39.56" fill="#ff0000"/>
<rect x="129.55" y="482.45" width="10.6" height="46.85" fill="#ff0000"/>
<rect x="149.42" y="483.67" width="10.6" height="45.63" fill="#ff0000"/>
<rect x="169.29" y="488.52" width="10.6" height="40.78" fill="#ff0000"/>
<rect x="189.16" y="491.68" width="10.6" height="37.62" fill="#ff0000"/>
<rect x="209.03" y="499.21" width="10.6" height="30.09" fill="#ff7e00"/>
<rect x="228.90" y="506.49" width="10.6" height="22.81" fill="#ffff00"/>
<rect x="248.77" y="509.65" width="10.6" height="19.65" fill="#ffff00"/>
<rect x="268.64" y="511.59" width="10.6" height="17.71" fill="#ffff00"/>
<rect x="288.51" y="509.40" width="10.6" height="19.90" fill="#ffff00"/>
<rect x="308.39" y="505.76" width="10.6" height="23.54" fill="#ffff00"/>
<rect x="328.26" y="505.52" width="10.6" height="23.78" fill="#ffff00"/>
<rect x="348.13" y="507.71" width="10.6" height="21.59" fill="#ffff00"/>
<rect x="368.00" y="511.35" width="10.6" height="17.95" fill="#ffff00"/>
<rect x="387.87" y="512.56" width="10.6" height="16.74" fill="#ffff00"/>
<rect x="407.74" y="506.49" width="10.6" height="22.81" fill="#ffff00"/>
<rect x="427.61" y="502.61" width="10.6" height="26.69" fill="#ff7e00"/>
<rect x="447.48" y="499.69" width="10.6" height="29.61" fill="#ff7e00"/>
<rect x="467.35" y="505.28" width="10.6" height="24.02" fill="#ff7e00"/>
<rect x="487.22" y="503.82" width="10.6" height="25.48" fill="#ff7e00"/>
<rect x="507.09" y="501.64" width="10.6" height="27.66" fill="#ff7e00"/>
<rect x="526.96" y="499.21" width="10.6" height="30.09" fill="#ff7e00"/>
</g>
<g font-family="Liberation Sans, sans-serif" font-size="8" fill="#666" text-anchor="end">
<text x="55.2" y="532.3" fill="#333">0</text>
<text x="55.2" y="508.0" fill="#333">100</text>
<text x="55.2" y="483.7" fill="#333">200</text>
<text x="55.2" y="459.5" fill="#333">300</text>
<text x="55.2" y="435.2" fill="#333">400</text>
<text x="55.2" y="410.9" fill="#333">500</text>
<text transform="translate(77.5,541.3) rotate(-45)">8 PM</text>
<text transform="translate(97.4,541.3) rotate(-45)">9 PM</text>
<text transform="translate(117.3,541.3) rotate(-45)">10 PM</text>
<text transform="translate(137.1,541.3) rotate(-45)">11 PM</text>
<text transform="translate(157.0,541.3) rotate(-45)">Feb 22, 2021 12 AM</text>
<text transform="translate(176.9,541.3) rotate(-45)">1 AM</text>
<text transform="translate(196.8,541.3) rotate(-45)">2 AM</text>
<text transform="translate(216.6,541.3) rotate(-45)">3 AM</text>
<text transform="translate(236.5,541.3) rotate(-45)">4 AM</text>
<text transform="translate(256.4,541.3) rotate(-45)">5 AM</text>
<text transform="translate(276.2,541.3) rotate(-45)">6 AM</text>
<text transform="translate(296.1,541.3) rotate(-45)">7 AM</text>
<text transform="translate(316.0,541.3) rotate(-45)">8 AM</text>
<text transform="translate(335.9,541.3) rotate(-45)">9 AM</text>
<text transform="translate(355.7,541.3) rotate(-45)">10 AM</text>
<text transform="translate(375.6,541.3) rotate(-45)">11 AM</text>
<text transform="translate(395.5,541.3) rotate(-45)">12 PM</text>
<text transform="translate(415.3,541.3) rotate(-45)">1 PM</text>
<text transform="translate(435.2,541.3) rotate(-45)">2 PM</text>
<text transform="translate(455.1,541.3) rotate(-45)">3 PM</text>
<text transform="translate(475.0,541.3) rotate(-45)">4 PM</text>
<text transform="translate(494.8,541.3) rotate(-45)">5 PM</text>
<text transform="translate(514.7,541.3) rotate(-45)">6 PM</text>
<text transform="translate(534.6,541.3) rotate(-45)">7 PM</text>
</g>
<text transform="translate(34.6,465.8) rotate(-90)" font-family="Liberation Sans, sans-serif" font-size="8.8" fill="#333" text-anchor="middle">AQI</text>
<text x="282" y="383" font-family="Liberation Sans, sans-serif" font-size="12.6" fill="#333" text-anchor="middle" letter-spacing="0.1">Bishkek – PM2.5</text>
</svg>
<div id="cc" class="abs">
<div class="top"><div style="font-size:10px;padding-top:3px;line-height:13px">Current Conditions</div><div style="font-size:8px;line-height:15px;margin-top:1px">observed at</div><div style="font-size:9.9px;line-height:12px">Feb 22, 2021 7:00 PM (LT)</div></div>
<div class="org">126 AQI<br>Unhealthy for Sensitive<br>Groups<br>PM2.5</div>
<div class="hm"><div style="text-align:center;font-weight:bold;color:#222">Health Message</div><div style="white-space:nowrap;margin-top:1.2px">When AQI values are between 101 and 150,<br>members of sensitive groups may<br>experience health effects, but the general<br>public is unlikely to be affected.</div></div>
</div>
</body></html>
